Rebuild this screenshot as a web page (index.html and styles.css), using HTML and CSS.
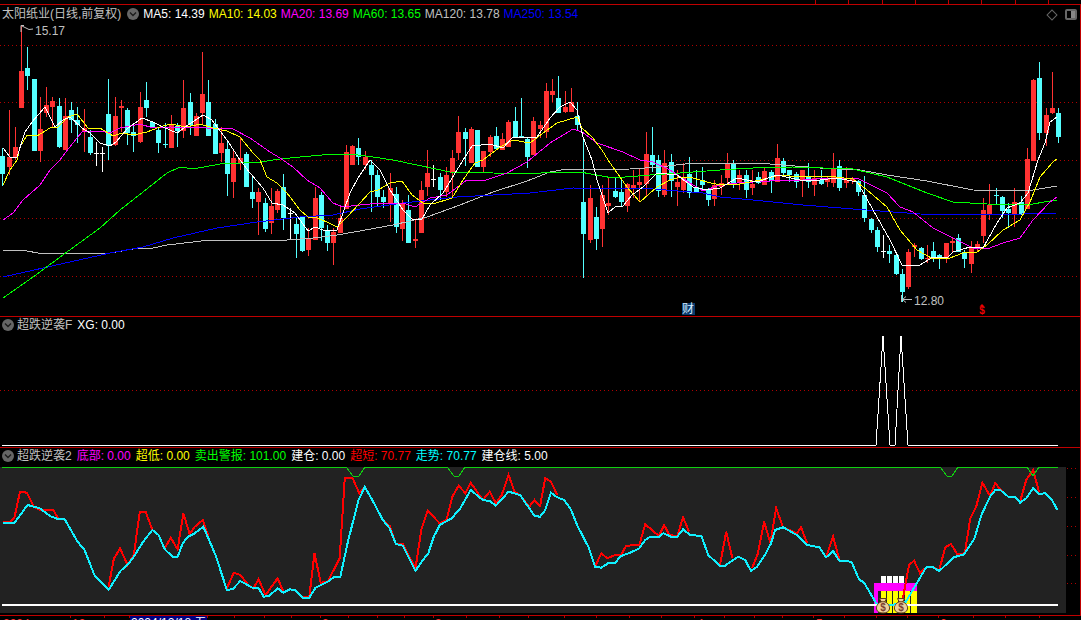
FILE: index.html
```html
<!DOCTYPE html>
<html>
<head>
    <title>太阳纸业 K线</title>
    <link rel="stylesheet" href="styles.css">
</head>
<body>
    <div class="screen">
        <div class="top-scale">
            <span></span><span></span><span></span><span></span><span></span><span></span><span></span><span></span>
        </div>

        <div class="panel panel-main">
            <svg id="mainChart" class="chart" viewBox="0 5 1080 311" width="1080" height="311"></svg>
            <div class="panel-head head-main">
                <span class="stock-name">太阳纸业(日线,前复权)</span>
                <svg class="drop" viewBox="0 0 12 12"><circle cx="6" cy="6" r="6"/><path d="M3 4.5 6 7.5 9 4.5"/></svg>
                <span class="white">MA5: 14.39</span>
                <span class="yellow">MA10: 14.03</span>
                <span class="magenta">MA20: 13.69</span>
                <span class="green">MA60: 13.65</span>
                <span class="gray">MA120: 13.78</span>
                <span class="blue">MA250: 13.54</span>
            </div>
            <div class="corner-tools">
                <span class="tool-diamond"></span>
                <span class="tool-split"><i></i></span>
            </div>
        </div>

        <div class="panel panel-xg">
            <svg id="xgChart" class="chart" viewBox="0 317 1080 130" width="1080" height="130"></svg>
            <div class="panel-head">
                <svg class="drop" viewBox="0 0 12 12"><circle cx="6" cy="6" r="6"/><path d="M3 4.5 6 7.5 9 4.5"/></svg>
                <span class="gray">超跌逆袭F</span>
                <span class="white">XG: 0.00</span>
            </div>
        </div>

        <div class="panel panel-trend">
            <svg id="trendChart" class="chart" viewBox="0 448 1080 167" width="1080" height="167"></svg>
            <div class="panel-head">
                <svg class="drop" viewBox="0 0 12 12"><circle cx="6" cy="6" r="6"/><path d="M3 4.5 6 7.5 9 4.5"/></svg>
                <span class="gray">超跌逆袭2</span>
                <span class="magenta">底部: 0.00</span>
                <span class="yellow">超低: 0.00</span>
                <span class="green">卖出警报: 101.00</span>
                <span class="white">建仓: 0.00</span>
                <span class="red">超短: 70.77</span>
                <span class="cyan">走势: 70.77</span>
                <span class="white">建仓线: 5.00</span>
            </div>
        </div>

        <svg id="timeAxis" class="time-axis" viewBox="0 616 1081 4" width="1081" height="4"></svg>
    </div>

    <script src="chart.js"></script>
</body>
</html>
```

FILE: styles.css
```css
html, body {
    margin: 0;
    padding: 0;
    background-color: #000;
}

.screen {
    width: 1081px;
    height: 620px;
    overflow: hidden;
    font-family: "Liberation Sans", "Noto Sans CJK SC", sans-serif;
    font-size: 12px;
}

.top-scale {
    display: flex;
    height: 5px;
    padding-left: 815px;
    box-sizing: border-box;
    border-bottom: 1px solid #c00000;
}

.top-scale span {
    width: 34px;
    margin-right: 0;
    border-left: 1px solid #c00000;
}

.panel {
    position: relative;
    width: 1081px;
    box-sizing: border-box;
    border-right: 1px solid #c00000;
    border-bottom: 1px solid #c00000;
}

.panel-main {
    height: 312px;
}

.panel-xg {
    height: 131px;
}

.panel-trend {
    height: 168px;
}

.chart {
    display: block;
}

.panel-head {
    position: absolute;
    top: 0;
    left: 2px;
    display: flex;
    align-items: center;
    gap: 5px;
    height: 16px;
    line-height: 16px;
    white-space: nowrap;
}

.head-main {
    gap: 4px;
    height: 18px;
    line-height: 18px;
}

.head-main .drop {
    margin-left: 2px;
}

.stock-name {
    color: #c0c0c0;
}

.drop {
    width: 12px;
    height: 12px;
    flex-shrink: 0;
}

.drop circle {
    fill: #666;
}

.drop path {
    fill: none;
    stroke: #1c1c1c;
    stroke-width: 1.4;
}

.panel-head .drop + .gray {
    margin-left: -2px;
}

.white { color: #fff; }
.yellow { color: #ff0; }
.magenta { color: #f0f; }
.green { color: #0f0; }
.gray { color: #c0c0c0; }
.blue { color: #0000ff; }
.red { color: #f00; }
.cyan { color: #0ff; }

.corner-tools {
    position: absolute;
    top: 4px;
    right: 3px;
    display: flex;
    align-items: center;
    gap: 9px;
}

.tool-diamond {
    width: 6px;
    height: 6px;
    border: 1px solid #666;
    transform: rotate(45deg);
}

.tool-split {
    display: flex;
    justify-content: flex-end;
    width: 8px;
    height: 7px;
    border: 2px solid #666;
    border-radius: 2px;
}

.tool-split i {
    width: 4px;
    background-color: #888;
}

.time-axis {
    display: block;
}

.chart polyline,
.chart rect,
.time-axis rect {
    shape-rendering: crispEdges;
}
```

FILE: chart.js
```js
const NS = "http://www.w3.org/2000/svg";

function add(parent, tag, attrs, text) {
    const el = document.createElementNS(NS, tag);
    for (const key in attrs) el.setAttribute(key, attrs[key]);
    if (text) el.textContent = text;
    parent.appendChild(el);
    return el;
}

function line(parent, points, color, width) {
    add(parent, "polyline", {
        points: points.map(p => p.join(",")).join(" "),
        fill: "none",
        stroke: color,
        "stroke-width": width || 1
    });
}

function dotted(parent, y, x1, x2) {
    add(parent, "line", {
        x1: x1, x2: x2, y1: y + 0.5, y2: y + 0.5,
        stroke: "#b00000", "stroke-dasharray": "1 3"
    });
}

// kind, high, body top, body bottom, low (page pixels)
const candles = [
    ["c",148,156,174,186],["r",110,157,167,175],["r",127,147,157,160],["r",26,71,108,108],
    ["c",47,68,76,90],["c",79,79,151,151],["r",97,129,151,162],["r",87,105,113,117],
    ["r",97,101,107,127],["c",98,106,147,148],["r",98,116,150,150],["c",102,110,120,133],
    ["c",107,120,125,143],["r",109,128,132,152],["c",130,137,153,155],["w",142,153,153,166],
    ["w",147,153,153,172],["c",79,114,146,160],["r",97,116,145,146],["r",100,106,108,132],
    ["c",108,110,133,145],["c",123,132,136,152],["r",92,107,142,143],["c",82,100,108,117],
    ["c",121,122,128,128],["c",128,130,143,153],["c",123,144,144,148],["r",115,125,148,148],
    ["c",123,126,131,147],["r",80,108,131,138],["c",93,102,125,135],["r",113,116,136,136],
    ["r",52,94,113,125],["c",80,102,136,136],["c",119,124,154,154],["r",127,143,153,162],
    ["c",140,149,174,196],["r",150,158,182,198],["r",138,158,163,170],["c",152,154,187,187],
    ["c",177,192,199,208],["r",188,192,202,235],["c",198,203,229,232],["r",188,206,223,234],
    ["r",189,191,210,213],["c",174,187,218,230],["w",208,213,213,240],["c",218,224,234,258],
    ["c",217,217,251,252],["r",228,239,250,256],["r",187,198,240,240],["c",192,195,228,241],
    ["c",225,230,243,251],["r",228,232,243,265],["r",206,218,233,233],["r",145,152,209,209],
    ["r",145,146,165,165],["c",138,148,157,165],["r",151,157,165,170],["c",160,165,175,212],
    ["c",170,175,197,207],["c",190,197,202,208],["r",173,188,203,222],["c",187,194,227,233],
    ["r",200,203,229,241],["c",195,210,243,243],["r",220,239,241,248],["r",181,190,233,233],
    ["r",150,173,187,196],["w",165,179,179,187],["c",173,177,190,200],["r",167,175,192,197],
    ["r",150,158,173,197],["r",116,132,153,160],["c",128,132,139,166],["r",127,129,163,163],
    ["c",130,130,167,167],["r",151,151,167,172],["r",135,137,152,157],["c",127,136,149,150],
    ["r",133,139,150,150],["r",120,122,147,147],["c",107,121,137,137],["c",98,136,138,138],
    ["c",138,139,157,168],["r",117,121,155,155],["r",121,125,129,138],["r",83,91,132,138],
    ["r",79,91,95,102],["c",76,98,113,113],["r",91,107,112,113],["r",88,102,112,112],
    ["c",102,116,125,130],["c",137,202,234,278],["r",185,198,240,243],["c",207,217,239,250],
    ["r",185,195,229,247],["r",177,203,206,215],["c",178,191,197,198],["c",178,192,202,207],
    ["r",183,184,206,212],["r",170,185,189,198],["r",168,182,185,202],["r",132,154,184,196],
    ["c",127,155,165,172],["c",155,160,191,197],["r",150,163,195,197],["c",154,162,181,197],
    ["r",170,182,187,206],["r",163,177,190,193],["c",157,174,193,198],["c",170,187,192,192],
    ["c",167,180,185,190],["c",188,190,200,206],["r",180,185,199,206],["r",175,183,187,195],
    ["r",153,163,178,183],["c",160,163,183,188],["r",170,175,183,190],["c",170,175,190,198],
    ["r",170,184,188,195],["c",172,177,183,184],["r",167,171,185,185],["c",170,172,181,193],
    ["r",144,158,182,182],["c",158,161,173,177],["c",170,170,175,182],["c",172,174,182,188],
    ["r",170,170,181,197],["c",163,176,182,188],["r",170,178,185,196],["c",170,180,184,185],
    ["r",177,179,182,187],["r",153,169,183,187],["c",160,166,188,191],["r",167,180,183,188],
    ["r",177,179,181,184],["c",180,181,192,196],["c",176,195,218,222],["c",218,219,230,233],
    ["c",227,230,247,252],["w",235,251,251,258],["c",245,251,254,263],["c",255,255,274,275],
    ["c",269,274,292,302],["r",249,252,287,289],["r",243,245,247,257],["c",247,248,259,260],
    ["r",245,258,258,263],["c",242,251,257,262],["c",254,255,259,269],["r",243,243,259,263],
    ["r",237,241,243,252],["c",234,238,252,252],["c",250,252,259,268],["r",241,247,264,273],
    ["r",241,244,249,252],["r",198,210,236,243],["r",184,205,214,220],["c",188,195,195,205],
    ["c",196,197,211,218],["c",203,209,213,228],["r",188,202,214,227],["c",196,202,215,215],
    ["r",148,159,209,209],["r",79,80,161,161],["c",62,78,133,140],["r",108,115,133,146],
    ["r",72,108,113,114],["c",108,113,137,143]
];

const ma5 = [[3,148],[10,157],[17,157],[25,132],[32,122],[45,107],[55,127],[63,120],[70,117],[82,128],[90,133],[100,143],[110,146],[116,142],[128,128],[142,118],[153,122],[163,127],[177,133],[188,125],[203,115],[212,120],[227,140],[240,160],[250,173],[263,188],[272,203],[283,205],[295,213],[308,231],[315,227],[323,230],[337,230],[350,193],[358,178],[370,160],[380,170],[390,190],[403,210],[413,220],[422,219],[430,205],[443,193],[457,170],[465,157],[472,146],[490,144],[503,148],[513,137],[527,137],[537,137],[550,118],[560,107],[570,102],[577,110],[583,137],[592,160],[597,180],[608,213],[615,207],[623,206],[632,195],[643,187],[657,173],[677,175],[693,187],[707,190],[720,188],[737,178],[757,182],[777,175],[800,180],[820,180],[837,178],[857,182],[863,192],[877,217],[890,240],[902,265],[920,265],[933,257],[947,258],[953,252],[970,247],[983,248],[997,223],[1007,208],[1020,203],[1028,193],[1038,160],[1045,143],[1050,122],[1057,117]];
const ma10 = [[3,185],[10,170],[17,160],[20,147],[27,135],[37,136],[50,128],[58,127],[68,117],[77,114],[88,128],[100,128],[113,136],[122,133],[133,135],[147,132],[160,127],[170,124],[187,127],[200,124],[213,128],[227,131],[240,137],[253,153],[260,160],[267,177],[277,183],[287,193],[300,210],[308,217],[317,218],[327,222],[337,227],[347,217],[360,203],[370,192],[378,190],[390,183],[402,181],[412,195],[423,203],[433,204],[452,198],[463,180],[475,163],[483,160],[500,147],[513,140],[530,143],[543,133],[557,123],[577,117],[582,128],[592,137],[602,150],[608,160],[620,177],[627,187],[640,202],[657,187],[670,180],[680,177],[693,178],[707,182],[720,185],[740,184],[760,180],[780,175],[800,177],[827,176],[853,179],[867,190],[887,207],[900,230],[917,250],[933,259],[950,258],[963,253],[977,252],[987,245],[1003,230],[1020,220],[1030,202],[1040,177],[1053,162],[1057,159]];
const ma20 = [[3,220],[13,213],[23,200],[40,185],[50,170],[60,160],[65,153],[73,143],[82,132],[100,131],[110,133],[120,128],[140,124],[153,128],[170,127],[207,128],[233,129],[250,138],[270,152],[280,158],[293,167],[307,180],[320,188],[333,203],[343,207],[360,205],[380,203],[403,203],[415,207],[430,198],[447,195],[467,180],[483,181],[507,173],[527,162],[533,157],[550,143],[573,129],[582,132],[597,143],[623,152],[640,160],[653,162],[670,170],[690,183],[703,191],[720,185],[737,183],[770,181],[803,180],[830,178],[857,178],[867,183],[887,193],[900,207],[913,212],[933,228],[953,238],[973,248],[987,249],[1003,243],[1020,238],[1033,220],[1050,202],[1057,197]];
const ma60 = [[3,298],[33,277],[67,252],[100,228],[120,210],[143,192],[167,173],[180,167],[193,169],[220,164],[260,162],[280,159],[300,157],[333,154],[358,155],[373,157],[393,160],[417,165],[450,172],[493,173],[533,174],[550,172],[580,172],[613,178],[650,175],[680,173],[720,170],[753,168],[793,167],[853,169],[887,177],[927,193],[953,202],[987,204],[1027,205],[1050,201],[1057,200]];
const ma120 = [[3,250],[27,251],[38,253],[87,253],[110,253],[133,249],[153,248],[167,245],[210,240],[260,240],[287,240],[313,238],[337,235],[360,231],[393,225],[427,217],[460,205],[493,192],[527,181],[550,172],[567,169],[593,170],[630,169],[660,167],[693,163],[720,163],[770,164],[820,168],[860,170],[887,175],[927,181],[973,190],[1027,191],[1057,186]];
const ma250 = [[3,277],[43,268],[110,253],[143,247],[173,238],[217,228],[257,222],[300,217],[333,215],[360,209],[403,203],[457,197],[530,193],[573,188],[653,189],[703,193],[720,197],[753,200],[803,205],[853,209],[920,214],[987,215],[1057,213]];

function drawMain() {
    const svg = document.getElementById("mainChart");
    [45, 102, 160, 218, 276].forEach(y => dotted(svg, y, 0, 1079));

    const colors = { r: "#ff3232", c: "#54ffff", w: "#ffffff" };
    candles.forEach((c, i) => {
        const x = Math.round(2.3 + 6.247 * i);
        const color = colors[c[0]];
        add(svg, "rect", { x: x, y: c[1], width: 1, height: c[4] - c[1], fill: color });
        add(svg, "rect", { x: x - 2, y: c[2], width: 5, height: Math.max(c[3] - c[2], 1), fill: color });
    });

    line(svg, ma120, "#c0c0c0");
    line(svg, ma250, "#0000ff");
    line(svg, ma60, "#00ff00");
    line(svg, ma20, "#ff00ff");
    line(svg, ma10, "#ffff00");
    line(svg, ma5, "#ffffff");

    // high and low marks
    add(svg, "path", { d: "M21 32V25.5H24M22 26 26 28 29 29.5 33 29", fill: "none", stroke: "#c0c0c0" });
    add(svg, "text", { x: 35, y: 35, fill: "#c0c0c0", "font-size": 12 }, "15.17");
    add(svg, "path", { d: "M901.5 295V302M912 299.5H902.5M906 296.5 902.5 299.5 906 302.5", fill: "none", stroke: "#c0c0c0" });
    add(svg, "text", { x: 914, y: 305, fill: "#c0c0c0", "font-size": 12 }, "12.80");

    // event markers on the bottom edge
    add(svg, "rect", { x: 682, y: 303, width: 13, height: 12, fill: "#0a3a6e" });
    add(svg, "text", { x: 682, y: 313, fill: "#d8ecff", "font-size": 12 }, "财");
    add(svg, "path", { d: "M982 304 984.5 306.5H979.5Z", fill: "#f00000" });
    add(svg, "text", { x: 979.2, y: 314, fill: "#f00000", "font-size": 10, "font-weight": "bold" }, "$");
}

function drawXg() {
    const svg = document.getElementById("xgChart");
    dotted(svg, 390, 0, 1079);
    line(svg, [[2,445],[876,445],[883,336],[890,445],[895,445],[901,336],[908,445],[1058,445]], "#ffffff");
}

// Trend lines were traced from a crop enlarged 2.9x wide, 3x high.
function trace(points, x0) {
    return points.map(p => [+(x0 + p[0] / 2.9).toFixed(1), +(440 + p[1] / 3).toFixed(1)]);
}

const cyanLeft = [[8,248],[42,248],[80,195],[115,205],[145,228],[170,238],[188,238],[225,305],[245,330],[275,408],[315,450],[350,392],[372,372],[388,350],[415,305],[442,270],[460,285],[478,328],[500,350],[515,350],[530,310],[545,290],[565,280],[590,260],[625,345],[658,450],[675,447],[697,423],[735,445],[750,445],[765,470],[780,468],[805,445],[822,458],[840,448],[855,450],[878,473],[897,473],[915,443],[950,425],[970,410],[987,410],[1010,300],[1040,180],[1058,140],[1085,190],[1110,240],[1130,265],[1148,312],[1168,317],[1205,392],[1225,362],[1242,340],[1258,290],[1275,255],[1310,235],[1335,205],[1365,150],[1400,180],[1420,183],[1438,197],[1475,155],[1508,165],[1535,205],[1550,228],[1566,230]];
const cyanRight = [[0,230],[15,210],[32,158],[50,172],[70,180],[88,205],[110,260],[140,320],[160,380],[178,383],[200,368],[218,368],[235,348],[262,338],[288,325],[305,300],[320,290],[345,290],[358,280],[380,290],[398,290],[415,268],[435,285],[468,288],[488,345],[522,378],[535,378],[575,350],[595,360],[612,393],[630,380],[655,340],[670,310],[682,270],[705,262],[745,285],[775,315],[810,322],[830,352],[850,333],[868,362],[903,365],[925,418],[940,428],[975,490],[990,495],[1020,495],[1060,487],[1120,382],[1140,382],[1158,393],[1200,352],[1230,343],[1260,295],[1280,225],[1305,170],[1320,150],[1335,150],[1358,170],[1378,170],[1392,188],[1410,175],[1430,145],[1447,162],[1465,160],[1485,180],[1500,210]];

// the red line only shows where it leaves the cyan one
const redLeft = [
    [[8,245],[30,245],[42,232],[58,155],[78,158],[98,200],[115,210],[155,210],[170,238]],
    [[315,440],[330,357],[348,325],[370,375],[388,345],[405,217],[423,217],[442,270]],
    [[478,325],[495,293],[515,328],[532,220],[550,283],[565,260],[588,240],[605,290]],
    [[658,445],[678,398],[697,405],[720,435],[735,445],[750,418],[770,465],[805,415],[822,455]],
    [[878,472],[897,470],[912,340],[930,428],[950,425],[985,355],[1000,113],[1022,113],[1042,160],[1058,140]],
    [[1110,240],[1130,258],[1148,312],[1168,312],[1205,385],[1222,268],[1240,212],[1275,250],[1295,240],[1312,170],[1330,137],[1350,160],[1365,128],[1400,180],[1420,155],[1438,190],[1455,165],[1475,105],[1492,155],[1508,165],[1535,200],[1550,180],[1566,200]]
];
const redRight = [
    [[0,200],[15,115],[32,125],[50,165]],
    [[160,378],[178,340],[195,355],[218,345],[235,345],[250,317],[288,315],[305,253],[345,288],[360,255],[375,285],[398,288],[415,232],[432,275]],
    [[522,375],[540,275],[558,355]],
    [[615,385],[632,340],[650,245],[668,308],[685,205],[705,262],[745,280],[757,262],[775,310]],
    [[830,350],[850,290],[868,358]],
    [[1050,488],[1070,375],[1085,362],[1102,400],[1120,382],[1140,382],[1158,390],[1175,322],[1192,312],[1210,342],[1232,340],[1248,235],[1265,200],[1283,128],[1305,168],[1320,130],[1335,148],[1358,170],[1378,170],[1392,185],[1410,120],[1430,90],[1447,155]]
];

const warnLine = [[2,467],[346,467],[353,476],[359,476],[365,467],[447,467],[454,476],[459,476],[465,467],[940,467],[947,476],[952,476],[958,467],[1027,467],[1033,476],[1039,467],[1058,467]];

function drawBag(svg, cx) {
    const g = add(svg, "g", { transform: "translate(" + (cx - 7) + " 598)" });
    add(g, "path", {
        d: "M3.5 0.5H10.5L8.8 3.8C12 5 14 8 13.5 11C13 14 10 15 7 15C4 15 1 14 0.5 11C0 8 2 5 5.2 3.8Z",
        fill: "#edd09a", stroke: "#5e3a14"
    });
    add(g, "path", { d: "M4.8 3.8H9.2", stroke: "#5e3a14" });
    add(g, "text", { x: 7, y: 13, "text-anchor": "middle", fill: "#7a3f30", "font-size": 10, "font-weight": "bold" }, "$");
}

function drawTrend() {
    const svg = document.getElementById("trendChart");
    add(svg, "rect", { x: 0, y: 467, width: 1066, height: 146, fill: "#222222" });
    [468, 497, 526, 555, 583].forEach(y => dotted(svg, y, 1067, 1079));

    // signal bars behind the bags
    add(svg, "rect", { x: 874, y: 583, width: 43, height: 8, fill: "#ff00ff" });
    add(svg, "rect", { x: 874, y: 591, width: 4, height: 22, fill: "#ff00ff" });
    [881, 887, 893, 899].forEach(x => {
        add(svg, "rect", { x: x, y: 576, width: 5, height: 7, fill: "#ffffff" });
        add(svg, "rect", { x: x, y: 591, width: 5, height: 22, fill: "#ffff00" });
    });
    add(svg, "rect", { x: 905, y: 591, width: 5, height: 22, fill: "#ffff00" });
    add(svg, "rect", { x: 911, y: 591, width: 6, height: 22, fill: "#ffff00" });

    add(svg, "rect", { x: 2, y: 604, width: 1056, height: 2, fill: "#ffffff" });

    redLeft.forEach(seg => line(svg, trace(seg, 0), "#ff0000", 2));
    redRight.forEach(seg => line(svg, trace(seg, 540), "#ff0000", 2));
    line(svg, trace(cyanLeft, 0).concat(trace(cyanRight, 540)), "#10f0ff", 2);
    line(svg, warnLine, "#10d010");

    drawBag(svg, 883);
    drawBag(svg, 901);
}

function drawAxis() {
    const svg = document.getElementById("timeAxis");
    const ticks = [70,104,129,207,234,264,291,320,348,377,404,433,466,499,528,564,596,629,661,694,724,754,782,813,844,876,907,938,973,1005,1039];
    ticks.forEach(x => add(svg, "rect", { x: x, y: 616, width: 1, height: 2, fill: "#b00000" }));

    add(svg, "rect", { x: 130, y: 616, width: 77, height: 4, fill: "#000080" });
    add(svg, "text", { x: 131, y: 627, fill: "#ffffff", "font-size": 12 }, "2024/12/18 五");

    const months = [[3,"2024"],[72,"12"],[322,"2"],[435,"3"],[697,"4"],[816,"5"],[940,"6"]];
    months.forEach(m => add(svg, "text", { x: m[0], y: 628, fill: "#ff3232", "font-size": 12 }, m[1]));
}

document.addEventListener("DOMContentLoaded", function() {
    drawMain();
    drawXg();
    drawTrend();
    drawAxis();
});
```
